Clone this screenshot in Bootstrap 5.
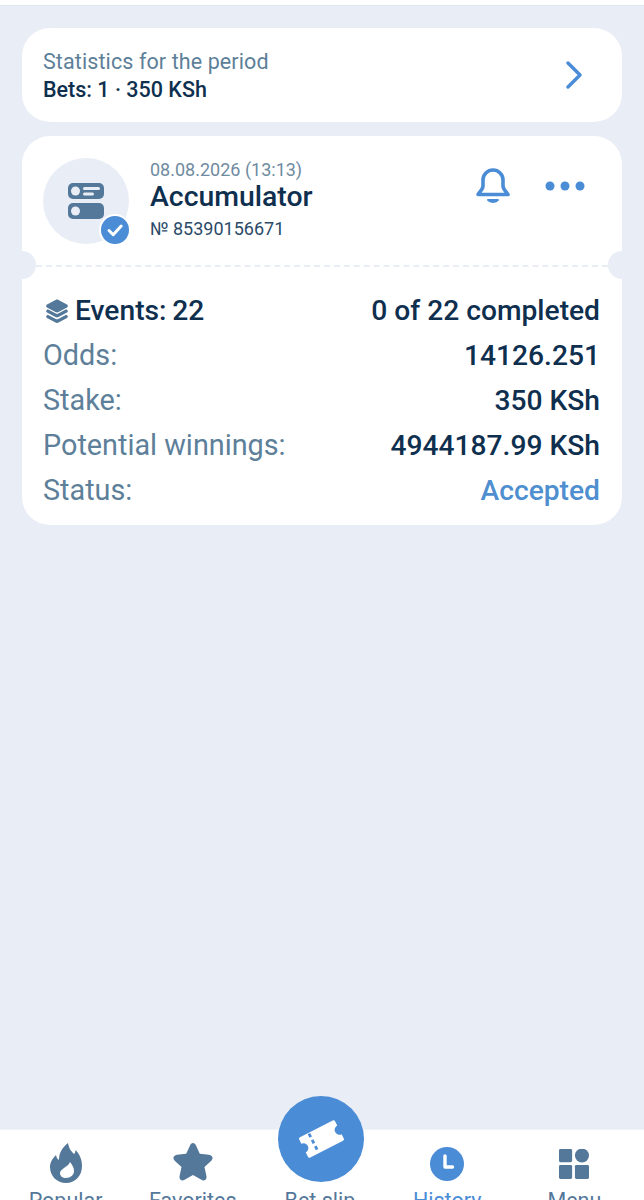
<!DOCTYPE html>
<html>

<head>
  <meta charset="utf-8">
  <meta name="viewport" content="width=device-width">
  <title>History</title>
  <link href="https://cdn.jsdelivr.net/npm/bootstrap@5.3.3/dist/css/bootstrap.min.css" rel="stylesheet"/>
  <style>
    html, body { height: 100%; }
    body { background: #e9edf5; font-family: Roboto, "Liberation Sans", sans-serif; color: #0f2f4f; overflow: hidden; }
    .app-shell { height: 1200px; overflow: hidden; }
    .top-strip { height: 6px; background: #fff; border-bottom: 1px solid #e2e6ee; }
    .page-body { padding: 22px 22px 0; gap: 14px; }
    .panel { border: 0; border-radius: 28px; background: #fff; color: #0f2f4f; }
    .stats-panel { height: 94px; padding: 0 39px 0 21px; }
    .stats-title { font-size: 21.5px; line-height: 30px; color: #5d7f99; letter-spacing: .1px; }
    .stats-value { font-size: 21.5px; line-height: 26px; font-weight: 500; }
    .bet-panel { height: 389px; overflow: hidden; }
    .bet-head { height: 129px; padding: 22px 37px 0 21px; }
    .bet-avatar { width: 86px; height: 86px; border-radius: 50%; background: #e9edf5; }
    .bet-check { position: absolute; right: -2px; bottom: -2px; width: 32px; height: 32px; border-radius: 50%; background: #fff; }
    .bet-info { margin-left: 21px; margin-top: 1px; }
    .bet-date { font-size: 18px; line-height: 21px; color: #6f8ba1; }
    .bet-name { font-size: 28.4px; line-height: 34px; font-weight: 500; }
    .bet-num { font-size: 18px; line-height: 24px; margin-top: 3px; color: #2a4a68; }
    .bet-actions { gap: 34px; padding-top: 7px; }
    .dots-ico { margin-top: 16px; }
    .ticket-line { height: 0; border-top: 2px dashed #e9edf5; margin: 0 14px; }
    .notch { position: absolute; top: 115px; width: 28px; height: 28px; border-radius: 50%; background: #e9edf5; }
    .notch-l { left: -14px; }
    .notch-r { right: -14px; }
    .bet-rows { padding: 21px 22px 0 21px; }
    .bet-row { height: 45px; font-size: 28.2px; line-height: 45px; font-weight: 500; white-space: nowrap; }
    .bet-row .row-key { color: #5d7f99; font-weight: 400; font-size: 28.8px; }
    .bet-row .row-first { color: #0f2f4f; font-weight: 500; }
    .stack-ico { margin: 0 7px 0 3px; }
    .status-ok { color: #4f8fd0; }
    .bottom-nav { height: 71px; background: #fff; overflow: hidden; padding: 0 6px 0 2px; border-top: 1px solid #f0f2f6; }
    .nav-cell { width: 20%; font-size: 21.5px; line-height: 28px; color: #54789a; }
    .nav-cell .nav-ico { height: 57px; }
    .ico-lift { margin-bottom: 6px; }
    .nav-active { color: #4a8cd6; }
    .betslip-fab { position: absolute; left: 278px; top: 1096px; width: 86px; height: 86px; border-radius: 50%; background: #4a8cd6; }
  </style>
</head>

<body>
  <div class="app-shell d-flex flex-column">
    <div class="top-strip"></div>

    <div class="page-body flex-grow-1 d-flex flex-column">
      <div class="card panel stats-panel flex-row align-items-center justify-content-between">
        <div>
          <div class="stats-title">Statistics for the period</div>
          <div class="stats-value">Bets: 1 · 350 KSh</div>
        </div>
        <svg width="18" height="28" viewBox="0 0 18 28" fill="none" stroke="#4a8cd6" stroke-width="3.4" stroke-linecap="round" stroke-linejoin="round"><path d="M3 2l12 12L3 26"/></svg>
      </div>

      <div class="card panel bet-panel">
        <div class="bet-head d-flex align-items-start">
          <div class="bet-avatar position-relative d-flex align-items-center justify-content-center flex-shrink-0">
            <svg width="36" height="36" viewBox="0 0 36 36">
              <rect x="0" y="0" width="36" height="16" rx="5" fill="#54789a"/>
              <rect x="0" y="20" width="36" height="16" rx="5" fill="#54789a"/>
              <circle cx="7.5" cy="8" r="4.5" fill="#e9edf5"/>
              <circle cx="7.5" cy="28" r="4.5" fill="#e9edf5"/>
              <rect x="15" y="4" width="17" height="3" rx="1.5" fill="#e9edf5"/>
              <rect x="15" y="9.5" width="11" height="3" rx="1.5" fill="#e9edf5"/>
            </svg>
            <div class="bet-check d-flex align-items-center justify-content-center">
              <svg width="28" height="28" viewBox="0 0 28 28">
                <circle cx="14" cy="14" r="14" fill="#4a8cd6"/>
                <path d="M8 14.5l4.2 4.2L20.2 10" fill="none" stroke="#fff" stroke-width="3" stroke-linecap="round" stroke-linejoin="round"/>
              </svg>
            </div>
          </div>
          <div class="bet-info flex-grow-1">
            <div class="bet-date">08.08.2026 (13:13)</div>
            <div class="bet-name">Accumulator</div>
            <div class="bet-num">№ 85390156671</div>
          </div>
          <div class="bet-actions d-flex align-items-start">
            <svg width="36" height="40" viewBox="0 0 36 40" fill="none" stroke="#4a8cd6" stroke-width="3.6" stroke-linecap="round" stroke-linejoin="round">
              <path d="M8 15a10 10 0 0 1 20 0v6c0 3 2.500 5 5 8.500H3c2.500-3.500 5-5.500 5-8.500z"/>
              <path d="M13 35c2 2.500 8 2.500 10 0z" fill="#4a8cd6" stroke-width="2"/>
            </svg>
            <svg class="dots-ico" width="40" height="10" viewBox="0 0 40 10" fill="#4a8cd6">
              <circle cx="5" cy="5" r="4.5"/><circle cx="20" cy="5" r="4.5"/><circle cx="35" cy="5" r="4.5"/>
            </svg>
          </div>
        </div>
        <div class="ticket-line"></div>
        <div class="notch notch-l"></div>
        <div class="notch notch-r"></div>
        <div class="bet-rows">
          <div class="bet-row d-flex justify-content-between">
            <span class="row-first d-flex align-items-center">
              <svg class="stack-ico" width="22" height="24" viewBox="0 0 22 24" fill="#54789a">
                <path d="M11 .5c.5 0 1 .2 1.500.4l8.500 4.600c1.200.7 1.200 2.300 0 3l-8.500 4.600c-1 .5-2 .5-3 0L1 8.500c-1.200-.7-1.200-2.300 0-3L9.500.9c.5-.2 1-.4 1.500-.4z"/>
                <path d="M1.800 10.200l8 4.400c.8.400 1.600.400 2.400 0l8-4.400.8.500c1.200.7 1.200 2.100 0 2.800l-8.500 4.600c-1 .5-2 .5-3 0L1 13.500c-1.200-.7-1.200-2.100 0-2.800z"/>
                <path d="M1.800 15.700l8 4.300c.8.400 1.600.400 2.400 0l8-4.300.8.500c1.200.7 1.200 2.100 0 2.800l-8.500 4.500c-1 .5-2 .5-3 0L1 19c-1.200-.7-1.200-2.100 0-2.800z"/>
              </svg>Events:&thinsp;22</span>
            <span>0 of 22 completed</span>
          </div>
          <div class="bet-row d-flex justify-content-between"><span class="row-key">Odds:</span><span>14126.251</span></div>
          <div class="bet-row d-flex justify-content-between"><span class="row-key">Stake:</span><span>350 KSh</span></div>
          <div class="bet-row d-flex justify-content-between"><span class="row-key">Potential winnings:</span><span>4944187.99 KSh</span></div>
          <div class="bet-row d-flex justify-content-between"><span class="row-key">Status:</span><span class="status-ok">Accepted</span></div>
        </div>
      </div>
    </div>

    <nav class="bottom-nav d-flex flex-shrink-0">
      <div class="nav-cell text-center">
        <div class="nav-ico d-flex align-items-end justify-content-center">
          <svg class="mb-1" width="32" height="40" viewBox="0 0 32 40">
            <path fill-rule="evenodd" fill="#54789a" d="M18 0c1 6 3 8 6 11 1-1 1.500-2.500 1.500-4C29.500 11 32 16 32 23c0 10-7 17-16 17S0 33 0 24c0-5 3-9 6-12 .5 2 1 4 3 5 0-8 4-13 9-17zM16 35c4.500 0 8-3 8-7 0-4-2-6-4-9-1 3-3 3.500-6 6-2 1.500-4 3-4 5 0 3 2.500 5 6 5z"/>
          </svg>
        </div>
        <div>Popular</div>
      </div>
      <div class="nav-cell text-center">
        <div class="nav-ico d-flex align-items-end justify-content-center">
          <svg class="ico-lift" width="40" height="38" viewBox="0 0 40 38">
            <path fill="#54789a" d="M20 0c1.500 0 2.300 1 3 2.500l3.800 8.300 9.200 1c3.500.4 4.800 3.600 2.300 6l-6.800 6.300 1.900 9c.7 3.400-2 5.400-5 3.700L20 32l-8.400 4.800c-3 1.700-5.700-.3-5-3.700l1.900-9-6.800-6.300c-2.500-2.400-1.200-5.600 2.300-6l9.200-1L17 2.500C17.700 1 18.500 0 20 0z"/>
          </svg>
        </div>
        <div>Favorites</div>
      </div>
      <div class="nav-cell text-center">
        <div class="nav-ico"></div>
        <div>Bet slip</div>
      </div>
      <div class="nav-cell nav-active text-center">
        <div class="nav-ico d-flex align-items-end justify-content-center">
          <svg class="ico-lift" width="34" height="34" viewBox="0 0 34 34">
            <circle cx="17" cy="17" r="17" fill="#4a8cd6"/>
            <path d="M15 9v11h7.500" fill="none" stroke="#fff" stroke-width="3.400" stroke-linecap="round" stroke-linejoin="round"/>
          </svg>
        </div>
        <div>History</div>
      </div>
      <div class="nav-cell text-center">
        <div class="nav-ico d-flex align-items-end justify-content-center">
          <svg class="mb-2" width="30" height="30" viewBox="0 0 32 32" fill="#54789a">
            <rect x="0" y="0" width="14" height="14" rx="1.500"/>
            <circle cx="24.500" cy="7" r="7.500"/>
            <rect x="0" y="17" width="14" height="15" rx="1.500"/>
            <rect x="17" y="17" width="15" height="15" rx="1.500"/>
          </svg>
        </div>
        <div>Menu</div>
      </div>
    </nav>

    <div class="betslip-fab d-flex align-items-center justify-content-center">
      <svg width="49" height="44" viewBox="0 0 56 50">
        <g transform="rotate(-27 28 25)">
          <path fill="#fff" d="M7 12h42a2 2 0 0 1 2 2v5.500a5.500 5.500 0 0 0 0 11V36a2 2 0 0 1-2 2H7a2 2 0 0 1-2-2v-5.500a5.500 5.500 0 0 0 0-11V14a2 2 0 0 1 2-2z"/>
          <path d="M18 13v24" stroke="#4a8cd6" stroke-width="3.200" stroke-dasharray="4.500 3.500" fill="none"/>
        </g>
      </svg>
    </div>
  </div>

  <script src="https://cdn.jsdelivr.net/npm/bootstrap@5.3.3/dist/js/bootstrap.bundle.min.js"></script>
</body>

</html>
